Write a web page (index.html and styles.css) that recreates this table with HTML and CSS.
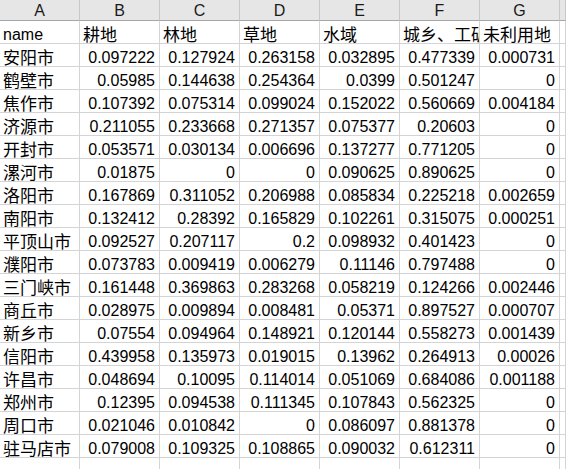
FILE: index.html
```html
<!DOCTYPE html>
<html lang="zh-CN">
<head>
<meta charset="utf-8">
<title>Sheet</title>
<link rel="stylesheet" href="styles.css">
</head>
<body>
<div class="sheet">
  <div class="ch">A</div><div class="ch">B</div><div class="ch">C</div><div class="ch">D</div><div class="ch">E</div><div class="ch">F</div><div class="ch">G</div><div class="ch"></div>

  <div class="c t">name</div><div class="c t zh">耕地</div><div class="c t zh">林地</div><div class="c t zh">草地</div><div class="c t zh">水域</div><div class="c t zh clip">城乡、工矿用地</div><div class="c t zh">未利用地</div><div class="c"></div>
  <div class="c t zh">安阳市</div><div class="c n">0.097222</div><div class="c n">0.127924</div><div class="c n">0.263158</div><div class="c n">0.032895</div><div class="c n">0.477339</div><div class="c n">0.000731</div><div class="c"></div>
  <div class="c t zh">鹤壁市</div><div class="c n">0.05985</div><div class="c n">0.144638</div><div class="c n">0.254364</div><div class="c n">0.0399</div><div class="c n">0.501247</div><div class="c n">0</div><div class="c"></div>
  <div class="c t zh">焦作市</div><div class="c n">0.107392</div><div class="c n">0.075314</div><div class="c n">0.099024</div><div class="c n">0.152022</div><div class="c n">0.560669</div><div class="c n">0.004184</div><div class="c"></div>
  <div class="c t zh">济源市</div><div class="c n">0.211055</div><div class="c n">0.233668</div><div class="c n">0.271357</div><div class="c n">0.075377</div><div class="c n">0.20603</div><div class="c n">0</div><div class="c"></div>
  <div class="c t zh">开封市</div><div class="c n">0.053571</div><div class="c n">0.030134</div><div class="c n">0.006696</div><div class="c n">0.137277</div><div class="c n">0.771205</div><div class="c n">0</div><div class="c"></div>
  <div class="c t zh">漯河市</div><div class="c n">0.01875</div><div class="c n">0</div><div class="c n">0</div><div class="c n">0.090625</div><div class="c n">0.890625</div><div class="c n">0</div><div class="c"></div>
  <div class="c t zh">洛阳市</div><div class="c n">0.167869</div><div class="c n">0.311052</div><div class="c n">0.206988</div><div class="c n">0.085834</div><div class="c n">0.225218</div><div class="c n">0.002659</div><div class="c"></div>
  <div class="c t zh">南阳市</div><div class="c n">0.132412</div><div class="c n">0.28392</div><div class="c n">0.165829</div><div class="c n">0.102261</div><div class="c n">0.315075</div><div class="c n">0.000251</div><div class="c"></div>
  <div class="c t zh">平顶山市</div><div class="c n">0.092527</div><div class="c n">0.207117</div><div class="c n">0.2</div><div class="c n">0.098932</div><div class="c n">0.401423</div><div class="c n">0</div><div class="c"></div>
  <div class="c t zh">濮阳市</div><div class="c n">0.073783</div><div class="c n">0.009419</div><div class="c n">0.006279</div><div class="c n">0.11146</div><div class="c n">0.797488</div><div class="c n">0</div><div class="c"></div>
  <div class="c t zh">三门峡市</div><div class="c n">0.161448</div><div class="c n">0.369863</div><div class="c n">0.283268</div><div class="c n">0.058219</div><div class="c n">0.124266</div><div class="c n">0.002446</div><div class="c"></div>
  <div class="c t zh">商丘市</div><div class="c n">0.028975</div><div class="c n">0.009894</div><div class="c n">0.008481</div><div class="c n">0.05371</div><div class="c n">0.897527</div><div class="c n">0.000707</div><div class="c"></div>
  <div class="c t zh">新乡市</div><div class="c n">0.07554</div><div class="c n">0.094964</div><div class="c n">0.148921</div><div class="c n">0.120144</div><div class="c n">0.558273</div><div class="c n">0.001439</div><div class="c"></div>
  <div class="c t zh">信阳市</div><div class="c n">0.439958</div><div class="c n">0.135973</div><div class="c n">0.019015</div><div class="c n">0.13962</div><div class="c n">0.264913</div><div class="c n">0.00026</div><div class="c"></div>
  <div class="c t zh">许昌市</div><div class="c n">0.048694</div><div class="c n">0.10095</div><div class="c n">0.114014</div><div class="c n">0.051069</div><div class="c n">0.684086</div><div class="c n">0.001188</div><div class="c"></div>
  <div class="c t zh">郑州市</div><div class="c n">0.12395</div><div class="c n">0.094538</div><div class="c n">0.111345</div><div class="c n">0.107843</div><div class="c n">0.562325</div><div class="c n">0</div><div class="c"></div>
  <div class="c t zh">周口市</div><div class="c n">0.021046</div><div class="c n">0.010842</div><div class="c n">0</div><div class="c n">0.086097</div><div class="c n">0.881378</div><div class="c n">0</div><div class="c"></div>
  <div class="c t zh">驻马店市</div><div class="c n">0.079008</div><div class="c n">0.109325</div><div class="c n">0.108865</div><div class="c n">0.090032</div><div class="c n">0.612311</div><div class="c n">0</div><div class="c"></div>
  <div class="c"></div><div class="c"></div><div class="c"></div><div class="c"></div><div class="c"></div><div class="c"></div><div class="c"></div><div class="c"></div>
</div>
</body>
</html>
```

FILE: styles.css
```css
html, body {
  margin: 0;
  padding: 0;
  background: #ffffff;
  overflow: hidden;
}

.sheet {
  display: grid;
  grid-template-columns: repeat(7, 80px) 1fr;
  grid-auto-rows: 23px;
  grid-template-rows: 21px;
  width: 566px;
  font-family: "Liberation Sans", "Noto Sans CJK SC", sans-serif;
  color: #000;
}

.ch {
  box-sizing: border-box;
  height: 21px;
  background: #e6e6e6;
  border-right: 1px solid #c8c8c8;
  border-bottom: 1px solid #a6a6a6;
  font-size: 16px;
  line-height: 16px;
  padding-top: 3px;
  text-align: center;
  color: #1a1a1a;
}

.c {
  box-sizing: border-box;
  height: 23px;
  border-right: 1px solid #d4d4d4;
  border-bottom: 1px solid #d4d4d4;
  display: flex;
  align-items: flex-end;
  white-space: nowrap;
  font-size: 16px;
  line-height: 16px;
}

.t {
  justify-content: flex-start;
  padding-left: 3px;
}

.n {
  justify-content: flex-end;
  padding-right: 4px;
}

.zh {
  font-family: "Noto Sans CJK SC", sans-serif;
  font-size: 17px;
  line-height: 17px;
  padding-bottom: 1px;
}

.clip {
  overflow: hidden;
}
```
